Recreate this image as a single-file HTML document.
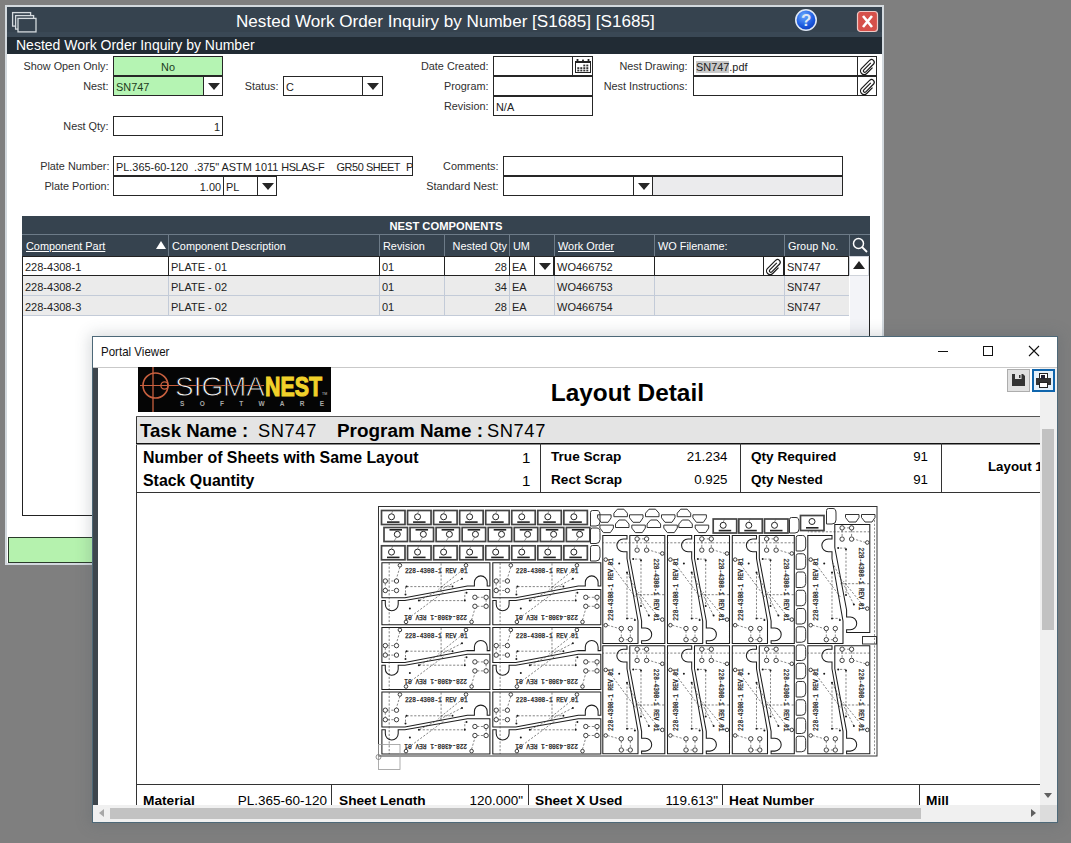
<!DOCTYPE html>
<html><head><meta charset="utf-8">
<style>
*{box-sizing:border-box;margin:0;padding:0}
html,body{width:1071px;height:843px;overflow:hidden;background:#7f7f7f;font-family:"Liberation Sans",sans-serif;position:relative}
.a{position:absolute}
.lbl{position:absolute;font-size:10.85px;color:#2f2f2f;text-align:right;white-space:nowrap;line-height:12px}
.box{position:absolute;border:1px solid #262626;background:#fff;font-size:10.9px;color:#222;white-space:nowrap;overflow:hidden;line-height:20px;padding-left:2px}
.dd{position:absolute;border:1px solid #262626;background:#fff}
.dd:after{content:"";position:absolute;left:4px;top:6px;border-left:6px solid transparent;border-right:6px solid transparent;border-top:7px solid #262626}
.hd{position:absolute;color:#fff;font-size:10.9px;line-height:20px;white-space:nowrap}
.cell{position:absolute;font-size:11px;color:#222;line-height:20px;white-space:nowrap}
</style></head><body>

<!-- MAIN WINDOW -->
<div class="a" style="left:5px;top:5px;width:879px;height:560px;background:#d3d9de"></div>
<div class="a" style="left:7px;top:7px;width:875px;height:556px;background:#fff"></div>
<div class="a" style="left:7px;top:7px;width:875px;height:30px;background:#36434f"></div>
<div class="a" style="left:7px;top:32px;width:875px;height:5px;background:#3a4855"></div>
<div class="a" style="left:7px;top:37px;width:875px;height:17px;background:#212b34"></div>
<div class="a" style="left:236px;top:10px;font-size:17.1px;color:#fff;line-height:24px;white-space:nowrap">Nested Work Order Inquiry by Number [S1685] [S1685]</div>
<div class="a" style="left:16px;top:36px;font-size:14px;color:#fff;line-height:18px;white-space:nowrap">Nested Work Order Inquiry by Number</div>

<!-- form labels -->
<div class="lbl" style="right:962.5px;top:60px">Show Open Only:</div>
<div class="lbl" style="right:962.5px;top:80px">Nest:</div>
<div class="lbl" style="right:962.5px;top:120px">Nest Qty:</div>
<div class="lbl" style="right:792.5px;top:80px">Status:</div>
<div class="lbl" style="right:582.5px;top:60px">Date Created:</div>
<div class="lbl" style="right:582.5px;top:80px">Program:</div>
<div class="lbl" style="right:582.5px;top:100px">Revision:</div>
<div class="lbl" style="right:383.5px;top:60px">Nest Drawing:</div>
<div class="lbl" style="right:383.5px;top:80px">Nest Instructions:</div>
<div class="lbl" style="right:961.5px;top:160px">Plate Number:</div>
<div class="lbl" style="right:961.5px;top:180px">Plate Portion:</div>
<div class="lbl" style="right:572.5px;top:160px">Comments:</div>
<div class="lbl" style="right:572.5px;top:180px">Standard Nest:</div>

<!-- boxes -->
<div class="box" style="left:113px;top:56px;width:110px;height:20px;background:#b5f4b3;color:#1d3d1d;text-align:center;padding:0">No</div>
<div class="box" style="left:113px;top:76px;width:110px;height:20px;background:#b5f4b3;color:#1d3d1d">SN747</div>
<div class="dd" style="left:203px;top:76px;width:20px;height:20px"></div>
<div class="box" style="left:113px;top:116px;width:110px;height:20px;text-align:right;padding-right:2px">1</div>
<div class="box" style="left:283px;top:76px;width:100px;height:20px">C</div>
<div class="dd" style="left:362px;top:76px;width:21px;height:20px"></div>
<div class="box" style="left:493px;top:56px;width:100px;height:20px"></div>
<div class="a" style="left:572px;top:56px;width:21px;height:20px;border:1px solid #262626;background:#fff"></div>
<div class="box" style="left:493px;top:76px;width:100px;height:20px"></div>
<div class="box" style="left:493px;top:96px;width:100px;height:20px">N/A</div>
<div class="box" style="left:693px;top:56px;width:184px;height:20px"><span style="background:#c8c8c8">SN747</span>.pdf</div>
<div class="a" style="left:857px;top:56px;width:20px;height:20px;border:1px solid #262626;background:#fff"></div>
<div class="box" style="left:693px;top:76px;width:184px;height:20px"></div>
<div class="a" style="left:857px;top:76px;width:20px;height:20px;border:1px solid #262626;background:#fff"></div>
<div class="box" style="left:113px;top:156px;width:300px;height:20px;white-space:pre">PL.365-60-120  .375" ASTM 1011 <span style="letter-spacing:-0.45px">HSLAS-F</span></div>
<div class="a" style="left:336.5px;top:157px;font-size:10.9px;line-height:20px;color:#222;white-space:nowrap;letter-spacing:-0.42px">GR50 SHEET</div>
<div class="a" style="left:406px;top:157px;font-size:10.9px;line-height:20px;color:#222">P</div>
<div class="box" style="left:113px;top:176px;width:111px;height:20px;text-align:right;padding-right:2px">1.00</div>
<div class="box" style="left:223px;top:176px;width:54px;height:20px">PL</div>
<div class="dd" style="left:257px;top:176px;width:20px;height:20px"></div>
<div class="box" style="left:503px;top:156px;width:340px;height:20px"></div>
<div class="box" style="left:503px;top:176px;width:150px;height:20px"></div>
<div class="dd" style="left:633px;top:176px;width:20px;height:20px"></div>
<div class="a" style="left:653px;top:176px;width:190px;height:20px;border:1px solid #262626;border-left:none;background:#ebebed"></div>

<!-- GRID -->
<div class="a" style="left:22px;top:216px;width:848px;height:300px;border:1px solid #222;border-top:none;background:#fff"></div>
<div class="a" style="left:22px;top:216px;width:848px;height:40px;background:#36434f"></div>
<div class="a" style="left:22px;top:234px;width:848px;height:1px;background:#6d7b88"></div>
<div class="hd" style="left:22px;top:216px;width:848px;height:18px;line-height:21px;text-align:center;font-weight:bold;font-size:11.2px">NEST COMPONENTS</div>
<div class="hd" style="left:26px;top:235.5px;text-decoration:underline;">Component Part</div>
<div class="a" style="left:168px;top:235px;width:1px;height:21px;background:#6d7b88"></div>
<div class="hd" style="left:172px;top:235.5px;">Component Description</div>
<div class="a" style="left:379px;top:235px;width:1px;height:21px;background:#6d7b88"></div>
<div class="hd" style="left:383px;top:235.5px;">Revision</div>
<div class="a" style="left:444px;top:235px;width:1px;height:21px;background:#6d7b88"></div>
<div class="hd" style="left:444px;top:235.5px;width:63px;text-align:right;">Nested Qty</div>
<div class="a" style="left:509px;top:235px;width:1px;height:21px;background:#6d7b88"></div>
<div class="hd" style="left:513px;top:235.5px;">UM</div>
<div class="a" style="left:554px;top:235px;width:1px;height:21px;background:#6d7b88"></div>
<div class="hd" style="left:558px;top:235.5px;text-decoration:underline;">Work Order</div>
<div class="a" style="left:654px;top:235px;width:1px;height:21px;background:#6d7b88"></div>
<div class="hd" style="left:658px;top:235.5px;">WO Filename:</div>
<div class="a" style="left:784px;top:235px;width:1px;height:21px;background:#6d7b88"></div>
<div class="hd" style="left:788px;top:235.5px;">Group No.</div>
<div class="a" style="left:849px;top:235px;width:1px;height:21px;background:#6d7b88"></div>
<div class="a" style="left:156px;top:241px;width:0;height:0;border-left:5px solid transparent;border-right:5px solid transparent;border-bottom:8px solid #fff"></div>
<div class="a" style="left:23px;top:256px;width:826px;height:20px;background:#fff"></div>
<div class="cell" style="left:25px;top:257px">228-4308-1</div>
<div class="a" style="left:168px;top:256px;width:1px;height:20px;background:#222"></div>
<div class="cell" style="left:171px;top:257px">PLATE - 01</div>
<div class="a" style="left:379px;top:256px;width:1px;height:20px;background:#222"></div>
<div class="cell" style="left:382px;top:257px">01</div>
<div class="a" style="left:444px;top:256px;width:1px;height:20px;background:#222"></div>
<div class="cell" style="left:444px;top:257px;width:63px;text-align:right">28</div>
<div class="a" style="left:509px;top:256px;width:1px;height:20px;background:#222"></div>
<div class="cell" style="left:512px;top:257px">EA</div>
<div class="a" style="left:554px;top:256px;width:1px;height:20px;background:#222"></div>
<div class="cell" style="left:557px;top:257px">WO466752</div>
<div class="a" style="left:654px;top:256px;width:1px;height:20px;background:#222"></div>
<div class="cell" style="left:657px;top:257px"></div>
<div class="a" style="left:784px;top:256px;width:1px;height:20px;background:#222"></div>
<div class="cell" style="left:787px;top:257px">SN747</div>
<div class="a" style="left:23px;top:275px;width:826px;height:1px;background:#222"></div>
<div class="a" style="left:23px;top:276px;width:826px;height:20px;background:#ebebeb"></div>
<div class="cell" style="left:25px;top:277px">228-4308-2</div>
<div class="a" style="left:168px;top:276px;width:1px;height:20px;background:#c3cbd8"></div>
<div class="cell" style="left:171px;top:277px">PLATE - 02</div>
<div class="a" style="left:379px;top:276px;width:1px;height:20px;background:#c3cbd8"></div>
<div class="cell" style="left:382px;top:277px">01</div>
<div class="a" style="left:444px;top:276px;width:1px;height:20px;background:#c3cbd8"></div>
<div class="cell" style="left:444px;top:277px;width:63px;text-align:right">34</div>
<div class="a" style="left:509px;top:276px;width:1px;height:20px;background:#c3cbd8"></div>
<div class="cell" style="left:512px;top:277px">EA</div>
<div class="a" style="left:554px;top:276px;width:1px;height:20px;background:#c3cbd8"></div>
<div class="cell" style="left:557px;top:277px">WO466753</div>
<div class="a" style="left:654px;top:276px;width:1px;height:20px;background:#c3cbd8"></div>
<div class="cell" style="left:657px;top:277px"></div>
<div class="a" style="left:784px;top:276px;width:1px;height:20px;background:#c3cbd8"></div>
<div class="cell" style="left:787px;top:277px">SN747</div>
<div class="a" style="left:23px;top:295px;width:826px;height:1px;background:#c3cbd8"></div>
<div class="a" style="left:23px;top:296px;width:826px;height:20px;background:#ebebeb"></div>
<div class="cell" style="left:25px;top:297px">228-4308-3</div>
<div class="a" style="left:168px;top:296px;width:1px;height:20px;background:#c3cbd8"></div>
<div class="cell" style="left:171px;top:297px">PLATE - 02</div>
<div class="a" style="left:379px;top:296px;width:1px;height:20px;background:#c3cbd8"></div>
<div class="cell" style="left:382px;top:297px">01</div>
<div class="a" style="left:444px;top:296px;width:1px;height:20px;background:#c3cbd8"></div>
<div class="cell" style="left:444px;top:297px;width:63px;text-align:right">28</div>
<div class="a" style="left:509px;top:296px;width:1px;height:20px;background:#c3cbd8"></div>
<div class="cell" style="left:512px;top:297px">EA</div>
<div class="a" style="left:554px;top:296px;width:1px;height:20px;background:#c3cbd8"></div>
<div class="cell" style="left:557px;top:297px">WO466754</div>
<div class="a" style="left:654px;top:296px;width:1px;height:20px;background:#c3cbd8"></div>
<div class="cell" style="left:657px;top:297px"></div>
<div class="a" style="left:784px;top:296px;width:1px;height:20px;background:#c3cbd8"></div>
<div class="cell" style="left:787px;top:297px">SN747</div>
<div class="a" style="left:23px;top:315px;width:826px;height:1px;background:#c3cbd8"></div>
<div class="a" style="left:22px;top:256px;width:827px;height:20px;border:1px solid #222"></div>
<div class="dd" style="left:534px;top:256px;width:20px;height:20px"></div>
<div class="a" style="left:763px;top:256px;width:21px;height:20px;border:1px solid #222;background:#fff"></div>
<div class="a" style="left:850px;top:276px;width:19px;height:239px;background:#f3f4f8"></div>
<div class="a" style="left:849px;top:256px;width:20px;height:20px;background:#fff;border:1px solid #cfd3da"></div>
<div class="a" style="left:853px;top:261px;width:0;height:0;border-left:6px solid transparent;border-right:6px solid transparent;border-bottom:8px solid #222"></div>
<div class="a" style="left:8px;top:537px;width:874px;height:26px;background:#b5f2ae;border:1px solid #2a3a2a;border-right:none"></div>

<!-- ICONS -->
<svg class="a" style="left:7px;top:7px" width="35" height="30"><g fill="none" stroke="#d5dade" stroke-width="1.3"><rect x="5.6" y="5.6" width="18" height="13.5" fill="#36434f"/><rect x="8.6" y="8.6" width="18" height="13.5" fill="#36434f"/><rect x="11" y="11.4" width="18" height="13.5" fill="#36434f"/></g></svg>
<svg class="a" style="left:794px;top:8px" width="24" height="24"><defs><radialGradient id="hg" cx="0.4" cy="0.3" r="0.8"><stop offset="0" stop-color="#6aa8ff"/><stop offset="0.6" stop-color="#1d5be0"/><stop offset="1" stop-color="#0b35b0"/></radialGradient></defs><circle cx="12" cy="12" r="10.2" fill="url(#hg)" stroke="#dfe8f5" stroke-width="1.6"/><text x="12.3" y="18.3" text-anchor="middle" font-family="Liberation Sans" font-weight="bold" font-size="17" fill="#dfe7f3">?</text></svg>
<svg class="a" style="left:856px;top:10px" width="23" height="23"><rect x="1.5" y="1.5" width="20" height="20" rx="3" fill="#d6504a" stroke="#eec9c6" stroke-width="1.2"/><path d="M7 6 L16 17 M16 6 L7 17" stroke="#fff" stroke-width="2.6"/></svg>
<svg class="a" style="left:572px;top:56px" width="21" height="20"><rect x="3.5" y="5.5" width="15" height="11" fill="none" stroke="#222" stroke-width="1"/><g fill="#222"><rect x="3" y="5" width="16" height="2"/><rect x="4.6" y="3" width="1.8" height="3"/><rect x="15.6" y="3" width="1.8" height="3"/><rect x="10.1" y="3.6" width="1.8" height="2"/></g><g fill="#333"><rect x="11.3" y="8.6" width="2" height="1.8"/><rect x="14.3" y="8.6" width="2" height="1.8"/><rect x="5.3" y="11.2" width="2" height="1.8"/><rect x="8.3" y="11.2" width="2" height="1.8"/><rect x="11.3" y="11.2" width="2" height="1.8"/><rect x="14.3" y="11.2" width="2" height="1.8"/><rect x="5.3" y="13.6" width="2" height="1.8"/><rect x="8.3" y="13.6" width="2" height="1.8"/><rect x="11.3" y="13.6" width="2" height="1.8"/><rect x="14.3" y="13.6" width="2" height="1.8"/></g></svg>
<svg class="a" style="left:857px;top:56px" width="20" height="20"><path d="M13.8 6.8 L6.8 13.8 A1.4 1.4 0 0 0 8.8 15.8 L16.6 8 A2.7 2.7 0 0 0 12.8 4.2 L4.6 12.4 A3.6 3.6 0 0 0 9.7 17.5 L15.5 11.7" stroke="#1a1a1a" stroke-width="1.2" fill="none"/></svg>
<svg class="a" style="left:857px;top:76px" width="20" height="20"><path d="M13.8 6.8 L6.8 13.8 A1.4 1.4 0 0 0 8.8 15.8 L16.6 8 A2.7 2.7 0 0 0 12.8 4.2 L4.6 12.4 A3.6 3.6 0 0 0 9.7 17.5 L15.5 11.7" stroke="#1a1a1a" stroke-width="1.2" fill="none"/></svg>
<svg class="a" style="left:763px;top:256px" width="21" height="20"><path d="M13.8 6.8 L6.8 13.8 A1.4 1.4 0 0 0 8.8 15.8 L16.6 8 A2.7 2.7 0 0 0 12.8 4.2 L4.6 12.4 A3.6 3.6 0 0 0 9.7 17.5 L15.5 11.7" stroke="#1a1a1a" stroke-width="1.2" fill="none"/></svg>
<svg class="a" style="left:852px;top:237px" width="16" height="17"><circle cx="6.5" cy="6.5" r="5" fill="none" stroke="#fff" stroke-width="1.5"/><path d="M10 10 L15 15" stroke="#fff" stroke-width="1.8"/></svg>

<!-- PORTAL VIEWER -->
<div class="a" style="left:92px;top:336px;width:966px;height:487px;box-shadow:0 0 14px 2px rgba(70,80,90,0.22)"></div>
<div class="a" style="left:92px;top:336px;width:966px;height:487px;background:#fff;border:1px solid #4d6878"></div>
<div class="a" style="left:101px;top:344px;font-size:13.2px;color:#111;line-height:16px;white-space:nowrap;transform:scaleX(0.875);transform-origin:0 0">Portal Viewer</div>
<!-- min max close -->
<div class="a" style="left:938px;top:351px;width:10px;height:1px;background:#111"></div>
<div class="a" style="left:983px;top:346px;width:10px;height:10px;border:1px solid #111"></div>
<svg class="a" style="left:1028px;top:345px" width="12" height="12"><path d="M1 1 L11 11 M11 1 L1 11" stroke="#111" stroke-width="1.1"/></svg>
<div class="a" style="left:93px;top:367px;width:964px;height:1px;background:#c9c9c9"></div>
<div class="a" style="left:93px;top:368px;width:5px;height:437px;background:#3e464d"></div>

<!-- REPORT -->
<div class="a" style="left:98px;top:368px;width:942px;height:437px;overflow:hidden">
 <div class="a" style="left:40px;top:-1px;width:193px;height:45px;background:#050505"></div>
 <div class="a" style="left:452.8px;top:11px;font-size:24.4px;font-weight:bold;color:#000;line-height:28px;white-space:nowrap">Layout Detail</div>
 <div class="a" style="left:38px;top:48px;width:1000px;height:400px;border-left:1px solid #333"></div>
 <div class="a" style="left:38px;top:48px;width:1000px;height:1px;background:#555"></div>
 <div class="a" style="left:39px;top:49px;width:1000px;height:26px;background:#e4e4e4"></div>
 <div class="a" style="left:38px;top:75px;width:1000px;height:1px;background:#111"></div>
 <div class="a" style="left:38px;top:76px;width:1000px;height:1px;background:#888"></div>
 <div class="a" style="left:38px;top:124px;width:1000px;height:1px;background:#333"></div>
 <div class="a" style="left:442px;top:75px;width:1px;height:49px;background:#333"></div>
 <div class="a" style="left:642px;top:75px;width:1px;height:49px;background:#333"></div>
 <div class="a" style="left:843px;top:75px;width:1px;height:49px;background:#333"></div>
 <div class="a" style="left:42px;top:52px;font-size:18.6px;line-height:22px;font-weight:bold;white-space:nowrap">Task Name :</div>
 <div class="a" style="left:160px;top:52px;font-size:18.3px;line-height:22px;letter-spacing:0.6px;white-space:nowrap">SN747</div>
 <div class="a" style="left:239px;top:52px;font-size:18.9px;line-height:22px;font-weight:bold;white-space:nowrap">Program Name :</div>
 <div class="a" style="left:389px;top:52px;font-size:18.3px;line-height:22px;letter-spacing:0.6px;white-space:nowrap">SN747</div>
 <div class="a" style="left:45px;top:81px;font-size:15.9px;font-weight:bold;line-height:18px;white-space:nowrap">Number of Sheets with Same Layout</div>
 <div class="a" style="left:45px;top:104px;font-size:15.9px;font-weight:bold;line-height:18px;white-space:nowrap">Stack Quantity</div>
 <div class="a" style="left:424px;top:81px;font-size:15px;line-height:18px">1</div>
 <div class="a" style="left:424px;top:104px;font-size:15px;line-height:18px">1</div>
 <div class="a" style="left:453px;top:81px;font-size:13.6px;font-weight:bold;line-height:16px;white-space:nowrap">True Scrap</div>
 <div class="a" style="left:453px;top:104px;font-size:13.6px;font-weight:bold;line-height:16px;white-space:nowrap">Rect Scrap</div>
 <div class="a" style="left:541.5px;top:81px;width:88px;text-align:right;font-size:13.3px;line-height:16px">21.234</div>
 <div class="a" style="left:541.5px;top:104px;width:88px;text-align:right;font-size:13.3px;line-height:16px">0.925</div>
 <div class="a" style="left:653px;top:81px;font-size:13.6px;font-weight:bold;line-height:16px;white-space:nowrap">Qty Required</div>
 <div class="a" style="left:653px;top:104px;font-size:13.6px;font-weight:bold;line-height:16px;white-space:nowrap">Qty Nested</div>
 <div class="a" style="left:742px;top:81px;width:88px;text-align:right;font-size:13.3px;line-height:16px">91</div>
 <div class="a" style="left:742px;top:104px;width:88px;text-align:right;font-size:13.3px;line-height:16px">91</div>
 <div class="a" style="left:890px;top:91px;font-size:13.3px;font-weight:bold;line-height:16px;white-space:nowrap">Layout 1</div>
 <!-- bottom row -->
 <div class="a" style="left:38px;top:416px;width:1000px;height:1px;background:#333"></div>
 <div class="a" style="left:233px;top:416px;width:1px;height:30px;background:#333"></div>
 <div class="a" style="left:430px;top:416px;width:1px;height:30px;background:#333"></div>
 <div class="a" style="left:624px;top:416px;width:1px;height:30px;background:#333"></div>
 <div class="a" style="left:821px;top:416px;width:1px;height:30px;background:#333"></div>
 <div class="a" style="left:45px;top:425px;font-size:13.7px;font-weight:bold;line-height:16px;white-space:nowrap">Material</div>
 <div class="a" style="left:120px;top:425px;width:109px;text-align:right;font-size:13.5px;line-height:16px">PL.365-60-120</div>
 <div class="a" style="left:241px;top:425px;font-size:13.7px;font-weight:bold;line-height:16px;white-space:nowrap">Sheet Length</div>
 <div class="a" style="left:320px;top:425px;width:105px;text-align:right;font-size:13.5px;line-height:16px">120.000"</div>
 <div class="a" style="left:437px;top:425px;font-size:13.7px;font-weight:bold;line-height:16px;white-space:nowrap">Sheet X Used</div>
 <div class="a" style="left:520px;top:425px;width:100px;text-align:right;font-size:13.5px;line-height:16px">119.613"</div>
 <div class="a" style="left:631px;top:425px;font-size:13.7px;font-weight:bold;line-height:16px;white-space:nowrap">Heat Number</div>
 <div class="a" style="left:828px;top:425px;font-size:13.7px;font-weight:bold;line-height:16px;white-space:nowrap">Mill</div>
</div>
<!-- NEST -->
<svg class="a" style="left:0;top:0" width="1071" height="843" viewBox="0 0 1071 843">
<defs>
<g id="sra">
<rect x="0.5" y="0.5" width="23.5" height="14" stroke="#444" stroke-width="1.7" fill="none"/>
<circle cx="10.5" cy="6.8" r="3" stroke="#222" stroke-width="1" fill="none"/>
<path d="M10.5 3.8 L12 0" stroke="#555" stroke-width="0.6"/>
<rect x="6" y="11.3" width="12.5" height="1.6" fill="#222"/>
</g>
<g id="srb">
<rect x="0.5" y="0.5" width="23.5" height="14" stroke="#444" stroke-width="1.7" fill="none"/>
<circle cx="13.8" cy="7.3" r="3" stroke="#222" stroke-width="1" fill="none"/>
<path d="M13 10.3 L10 15" stroke="#555" stroke-width="0.6"/>
<rect x="6" y="2" width="12.5" height="1.6" fill="#222"/>
</g>
<g id="hcA">
<path d="M0.5 0.5 H108.5 V23.7 H105.8 V20 A6.4 6.4 0 0 0 93 20 V23.7 H86 L23.5 35.5 H0.5 Z" stroke="#1e1e1e" stroke-width="1.05" fill="none"/>
<g stroke="#2a2a2a" stroke-width="0.9" fill="none">
<circle cx="3.9" cy="18.7" r="2.2"/><circle cx="15.1" cy="18.7" r="2.2"/>
<circle cx="3.9" cy="28.2" r="2.2"/><circle cx="15.1" cy="28.2" r="2.2"/>
<circle cx="18.5" cy="3" r="1.8"/><circle cx="84.6" cy="3" r="1.8"/>
</g>
<g stroke="#444" stroke-width="0.65" stroke-dasharray="2.2 1.6" fill="none">
<path d="M7.8 0.5 V62.5"/><path d="M59.7 1 V30"/>
<path d="M25.2 24.3 H71"/><path d="M24.1 24.3 V32"/>
<path d="M18.5 4.8 L15 16.5"/><path d="M84.6 4.8 L57 27"/><path d="M80.6 16.4 L37.5 38.3"/>
<path d="M6.1 18.7 H12.9"/><path d="M6.1 28.2 H12.9"/><path d="M3.9 21 V26"/>
</g>
<g fill="#1a1a1a"><circle cx="25.2" cy="24.3" r="1"/><circle cx="24.1" cy="32.1" r="1"/><circle cx="71.1" cy="24.3" r="1"/><circle cx="80.6" cy="16.4" r="1"/></g>
<text x="23.5" y="10.9" font-family="Liberation Mono" font-size="6.6" fill="#1a1a1a" stroke="#1a1a1a" stroke-width="0.25" textLength="62.7" lengthAdjust="spacingAndGlyphs">228-4308-1 REV 01</text>
</g>
<g id="hcB">
<path d="M0.5 38.3 H3.9 V42 A6.4 6.4 0 0 0 16.8 42 V38.3 H23.5 L86 27.3 H108.5 V62.5 H0.5 Z" stroke="#1e1e1e" stroke-width="1.05" fill="none"/>
<g stroke="#2a2a2a" stroke-width="0.9" fill="none">
<circle cx="93.5" cy="35" r="2.2"/><circle cx="104.7" cy="35" r="2.2"/>
<circle cx="93.5" cy="44" r="2.2"/><circle cx="104.7" cy="44" r="2.2"/>
<circle cx="24.6" cy="59.6" r="1.8"/><circle cx="90.2" cy="59.6" r="1.8"/>
</g>
<g stroke="#444" stroke-width="0.65" stroke-dasharray="2.2 1.6" fill="none">
<path d="M37.5 38.3 H83.4 V30.4"/><path d="M62 30 L24.6 57.8"/>
<path d="M95.7 35 H102.5"/><path d="M95.7 44 H102.5"/><path d="M90.2 57.8 L93.5 46.2"/><path d="M104.7 37.2 V41.8"/>
</g>
<g fill="#1a1a1a"><circle cx="85.1" cy="30.4" r="1"/><circle cx="83.4" cy="38.3" r="1"/><circle cx="37.5" cy="38.3" r="1"/><circle cx="28.5" cy="46.1" r="1"/></g>
<text x="-85.7" y="-52.3" transform="scale(-1,-1)" font-family="Liberation Mono" font-size="6.6" fill="#1a1a1a" stroke="#1a1a1a" stroke-width="0.25" textLength="62.7" lengthAdjust="spacingAndGlyphs">228-4308-1 REV 01</text>
</g>
<g id="hc"><use href="#hcA"/><use href="#hcB"/></g>
<g id="tab"><path d="M0.5 2.5 Q0.5 0.5 2.5 0.5 H7 Q10 0.5 10 5 V12 Q10 16 6 16 H0.5 Z" stroke="#333" stroke-width="1" fill="none"/></g>
<g id="htab"><path d="M0.5 0.5 H14 V3.5 L11 8 H4 L0.5 3.5 Z" stroke="#333" stroke-width="1" fill="none"/></g>
<g id="utab"><path d="M4 0.5 H10.5 L14 4.5 V8 H0.5 V4.5 Z" stroke="#333" stroke-width="1" fill="none"/></g>
</defs>
<rect x="378.5" y="506.5" width="498.5" height="249.5" stroke="#333" stroke-width="1" fill="none"/>
<use href="#sra" x="381.00" y="510"/>
<use href="#srb" x="383.50" y="527"/>
<use href="#sra" x="381.00" y="545.3"/>
<use href="#sra" x="407.05" y="510"/>
<use href="#srb" x="409.55" y="527"/>
<use href="#sra" x="407.05" y="545.3"/>
<use href="#sra" x="433.10" y="510"/>
<use href="#srb" x="435.60" y="527"/>
<use href="#sra" x="433.10" y="545.3"/>
<use href="#sra" x="459.15" y="510"/>
<use href="#srb" x="461.65" y="527"/>
<use href="#sra" x="459.15" y="545.3"/>
<use href="#sra" x="485.20" y="510"/>
<use href="#srb" x="487.70" y="527"/>
<use href="#sra" x="485.20" y="545.3"/>
<use href="#sra" x="511.25" y="510"/>
<use href="#srb" x="513.75" y="527"/>
<use href="#sra" x="511.25" y="545.3"/>
<use href="#sra" x="537.30" y="510"/>
<use href="#srb" x="539.80" y="527"/>
<use href="#sra" x="537.30" y="545.3"/>
<use href="#sra" x="563.35" y="510"/>
<use href="#srb" x="565.85" y="527"/>
<use href="#sra" x="563.35" y="545.3"/>
<use href="#tab" x="590" y="510"/>
<use href="#tab" x="590" y="527.5"/>
<use href="#tab" x="590" y="545"/>
<use href="#hc" x="381.4" y="562.3"/>
<use href="#hc" x="492.3" y="562.3"/>
<use href="#hc" x="381.4" y="626.9"/>
<use href="#hc" x="492.3" y="626.9"/>
<use href="#hc" x="381.4" y="691.5"/>
<use href="#hc" x="492.3" y="691.5"/>
<use href="#hc" transform="translate(665.3,535.0) rotate(90)"/>
<use href="#hc" transform="translate(730.0,535.0) rotate(90)"/>
<use href="#hc" transform="translate(794.8,535.0) rotate(90)"/>
<use href="#hcB" transform="translate(870.3,535.0) rotate(90)"/>
<use href="#hcA" transform="translate(870.3,524.0) rotate(90)"/>
<use href="#hc" transform="translate(665.3,645.3) rotate(90)"/>
<use href="#hc" transform="translate(730.0,645.3) rotate(90)"/>
<use href="#hc" transform="translate(794.8,645.3) rotate(90)"/>
<use href="#hc" transform="translate(870.3,645.3) rotate(90)"/>
<path d="M874.5 520 V755" stroke="#555" stroke-width="0.65" stroke-dasharray="2.2 1.6" fill="none"/>
<use href="#tab" x="795.7" y="535.00"/>
<use href="#tab" x="795.7" y="553.25"/>
<use href="#tab" x="795.7" y="571.50"/>
<use href="#tab" x="795.7" y="589.75"/>
<use href="#tab" x="795.7" y="608.00"/>
<use href="#tab" x="795.7" y="626.25"/>
<use href="#tab" x="795.7" y="644.50"/>
<use href="#tab" x="795.7" y="662.75"/>
<use href="#tab" x="795.7" y="681.00"/>
<use href="#tab" x="795.7" y="699.25"/>
<use href="#tab" x="795.7" y="717.50"/>
<use href="#tab" x="795.7" y="735.75"/>
<use href="#utab" x="613.4" y="508.7"/>
<use href="#utab" x="615.0" y="519.5"/>
<use href="#utab" x="645" y="508.7"/>
<use href="#utab" x="646.6" y="519.5"/>
<use href="#utab" x="676.7" y="508.7"/>
<use href="#utab" x="678.3000000000001" y="519.5"/>
<use href="#htab" x="597.1" y="514.3"/>
<use href="#htab" x="599.4" y="524.6"/>
<use href="#htab" x="629" y="514.3"/>
<use href="#htab" x="631.3" y="524.6"/>
<use href="#htab" x="661" y="514.3"/>
<use href="#htab" x="663.3" y="524.6"/>
<use href="#htab" x="692.4" y="514.3"/>
<use href="#htab" x="694.6999999999999" y="524.6"/>
<use href="#sra" x="712.7" y="518.5"/>
<use href="#sra" x="738.3" y="518.5"/>
<use href="#sra" x="764" y="518.5"/>
<use href="#tab" x="789" y="517"/>
<rect x="800.5" y="515.5" width="23.5" height="15" stroke="#444" stroke-width="1.7" fill="none"/><circle cx="812" cy="521.5" r="3" stroke="#222" stroke-width="1" fill="none"/><rect x="806" y="527" width="12.5" height="1.6" fill="#222"/>
<use href="#tab" x="826" y="508"/>
<use href="#htab" x="845" y="514"/>
<use href="#htab" x="861" y="514"/>
<rect x="862.5" y="636.5" width="14" height="7.5" stroke="#333" stroke-width="1" fill="none"/>
<rect x="378.5" y="744.5" width="21.5" height="25" stroke="#9a9a9a" stroke-width="0.8" fill="none"/>
<circle cx="378.5" cy="757" r="2.5" stroke="#777" stroke-width="0.8" fill="none"/>
</svg>
<!-- /NEST -->


<!-- LOGO -->
<svg class="a" style="left:138px;top:367px" width="193" height="45"><rect width="193" height="45" fill="#050505"/>
<g stroke="#c8603f" fill="none"><circle cx="17.5" cy="18.5" r="12.5" stroke-width="1.6"/><circle cx="26.5" cy="18.5" r="3.6" stroke-width="1.3"/><path d="M2 18.5 H126" stroke-width="1.1"/><path d="M15 0 V45" stroke-width="1.3"/></g>
<text x="37" y="28.8" font-family="Liberation Sans" font-size="27.5" fill="#f4f4f4" stroke="#050505" stroke-width="0.9" textLength="90" lengthAdjust="spacingAndGlyphs">SIGMA</text>
<path d="M37 18.5 H126" stroke="#c8603f" stroke-width="0.6" opacity="0.5"/>
<text x="127" y="28.8" font-family="Liberation Sans" font-weight="bold" font-size="27.5" fill="#f1d12a" stroke="#f1d12a" stroke-width="1.1" textLength="57" lengthAdjust="spacingAndGlyphs">NEST</text>
<text x="184" y="28" font-family="Liberation Sans" font-size="3.5" fill="#ccc">TM</text>
<text x="42" y="38.5" font-family="Liberation Sans" font-weight="bold" font-size="6.5" fill="#a8a8a8" textLength="144" lengthAdjust="spacing">SOFTWARE</text>
</svg>

<!-- scrollbars -->
<div class="a" style="left:1040px;top:368px;width:17px;height:437px;background:#f0f0f0"></div>
<div class="a" style="left:1042px;top:429px;width:12px;height:201px;background:#c2c2c2"></div>
<div class="a" style="left:1044px;top:793px;width:0;height:0;border-left:4px solid transparent;border-right:4px solid transparent;border-top:5px solid #606060"></div>
<div class="a" style="left:93px;top:805px;width:947px;height:17px;background:#f0f0f0"></div>
<div class="a" style="left:110px;top:808px;width:811px;height:11px;background:#c2c2c2"></div>
<div class="a" style="left:99px;top:809px;width:0;height:0;border-top:4px solid transparent;border-bottom:4px solid transparent;border-right:5px solid #a8a8a8"></div>
<div class="a" style="left:1031px;top:809px;width:0;height:0;border-top:4px solid transparent;border-bottom:4px solid transparent;border-left:5px solid #606060"></div>
<div class="a" style="left:1040px;top:805px;width:17px;height:17px;background:#dcdcdc"></div>

<!-- toolbar buttons -->
<div class="a" style="left:1007px;top:369px;width:23px;height:23px;background:#e1e1e1;border:1px solid #adadad"></div>
<div class="a" style="left:1032px;top:369px;width:23px;height:23px;background:#e5f1fb;border:2px solid #0f65ad"></div>
<!-- toolbar icons -->
<svg class="a" style="left:1007px;top:369px" width="23" height="23"><path d="M5 5 H16 L18 7 V17 H5 Z" fill="#333"/><rect x="8" y="5" width="6.5" height="5" fill="#e1e1e1"/><rect x="12" y="6" width="1.5" height="3" fill="#333"/></svg>
<svg class="a" style="left:1032px;top:369px" width="23" height="23"><rect x="7.5" y="4.5" width="8" height="5" fill="#fff" stroke="#222" stroke-width="1"/><rect x="4" y="9" width="15" height="7" fill="#333"/><rect x="7.5" y="13.5" width="8" height="5" fill="#fff" stroke="#222" stroke-width="1"/><rect x="9" y="6" width="4" height="4" fill="#223"/></svg>
</body></html>
